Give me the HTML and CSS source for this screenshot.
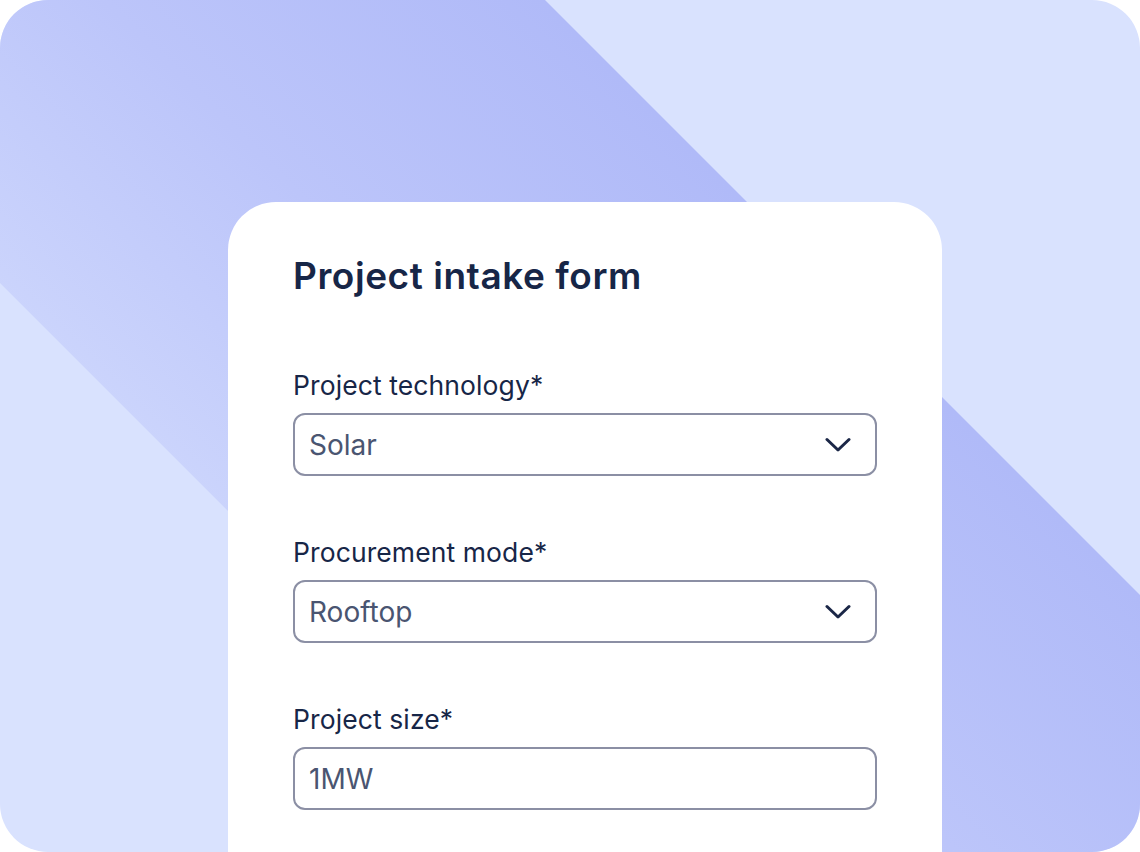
FILE: index.html
```html
<!DOCTYPE html>
<html lang="en">
<head>
<meta charset="utf-8">
<title>Project intake form</title>
<link rel="stylesheet" href="styles.css">
</head>
<body>
<div class="frame">
  <div class="band"></div>
  <section class="card">
    <h1 class="title">Project intake form</h1>
    <div class="field">
      <label class="label">Project technology*</label>
      <div class="input select">
        <span class="value">Solar</span>
        <svg class="chev" width="26" height="16" viewBox="0 0 26 16"><path d="M2 2.5 L13 13 L24 2.5" fill="none" stroke="#1b2747" stroke-width="3" stroke-linecap="round" stroke-linejoin="round"/></svg>
      </div>
    </div>
    <div class="field">
      <label class="label">Procurement mode*</label>
      <div class="input select">
        <span class="value">Rooftop</span>
        <svg class="chev" width="26" height="16" viewBox="0 0 26 16"><path d="M2 2.5 L13 13 L24 2.5" fill="none" stroke="#1b2747" stroke-width="3" stroke-linecap="round" stroke-linejoin="round"/></svg>
      </div>
    </div>
    <div class="field">
      <label class="label">Project size*</label>
      <div class="input">
        <span class="value">1MW</span>
      </div>
    </div>
  </section>
</div>
</body>
</html>
```
FILE: styles.css
```css
html, body {
  margin: 0;
  padding: 0;
  background: #ffffff;
}
body {
  font-family: "Inter", "Noto Sans", sans-serif;
}
.frame {
  position: relative;
  width: 1140px;
  height: 852px;
  border-radius: 48px;
  overflow: hidden;
  background: #d9e2fe;
  box-sizing: border-box;
  padding: 202px 198px 0 228px;
  display: flex;
}
.band {
  position: absolute;
  inset: 0;
  background: linear-gradient(45deg, #d3dcfd 0%, #cbd4fc 28%, #bcc5fa 48%, #b0baf8 70%, #aeb8f8 100%);
  clip-path: polygon(0 0, 545px 0, 1140px 595px, 1140px 852px, 569px 852px, 0 283px);
}
.card {
  position: relative;
  flex: 1;
  background: #ffffff;
  border-radius: 48px 48px 0 0;
  padding: 52px 65px 0 65px;
}
.title {
  margin: 0 0 71px 0;
  font-size: 37px;
  line-height: 44px;
  font-weight: 600;
  color: #172647;
  letter-spacing: 0.55px;
}
.field {
  margin-bottom: 60px;
}
.label {
  display: block;
  font-size: 26.5px;
  line-height: 32px;
  font-weight: 400;
  color: #172647;
  letter-spacing: 0.1px;
  margin-bottom: 12px;
}
.input {
  height: 63px;
  box-sizing: border-box;
  border: 2px solid #8b8fa4;
  border-radius: 12px;
  display: flex;
  align-items: center;
  justify-content: space-between;
  padding: 0 24px 0 14px;
}
.value {
  font-size: 28px;
  color: #4a5571;
}
.chev {
  display: block;
}
```
